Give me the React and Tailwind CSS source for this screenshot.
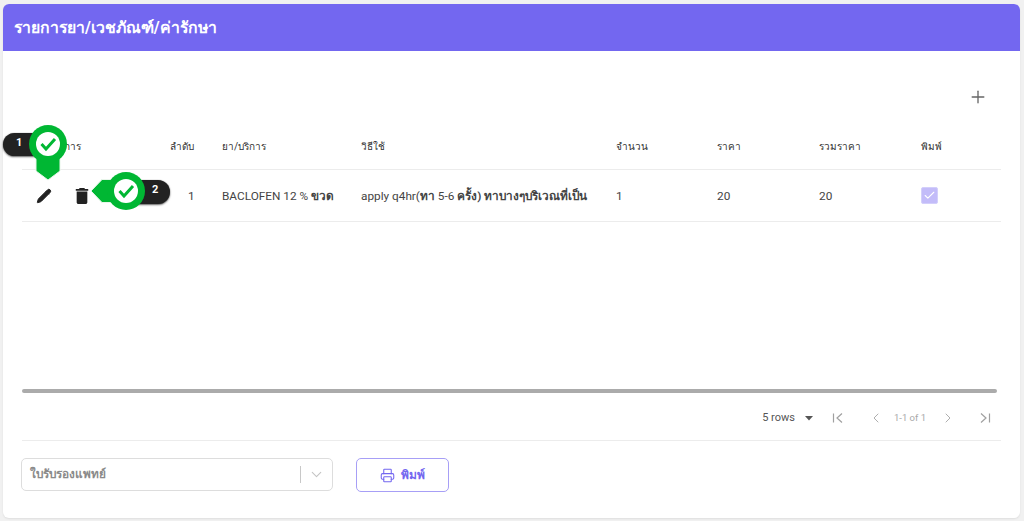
import React from "react";
import { Plus, Pencil, Printer, ChevronDown, ChevronLeft, ChevronRight, Check } from "lucide-react";

const font = "font-['Roboto','Noto_Sans','Noto_Sans_CJK_SC',sans-serif]";
const cols = "grid grid-cols-[128px_52px_139px_255px_101px_102px_102px_102px]";

function Pin1() {
  return (
    <div className="absolute left-[3px] top-[124px] w-[70px] h-[60px]">
      <div className="absolute left-0 top-[9px] w-[40px] h-[23px] rounded-full bg-[#222222] shadow-[0_1px_2px_rgba(0,0,0,0.6),0_0_1px_rgba(0,0,0,0.4)] text-white text-[11px] font-bold pl-[13px] leading-[20px]">1</div>
      <svg className="absolute left-[25px] top-0" width="40" height="58" viewBox="0 0 40 58">
        <path d="M8 34 L8 47 L20 56 L32 47 L32 34 Z" fill="#00b733" stroke="#e8f5ea" strokeWidth="1" />
        <circle cx="20" cy="20" r="19" fill="#00b733" />
        <circle cx="20" cy="20" r="12" fill="#fff" />
        <path d="M13.5 20 L18 25 L27 15" fill="none" stroke="#00b733" strokeWidth="3" />
      </svg>
    </div>
  );
}

function Pin2() {
  return (
    <div className="absolute left-[90px] top-[171px] w-[82px] h-[42px]">
      <div className="absolute right-[2px] top-[9px] w-[50px] h-[24px] rounded-full bg-[#222222] shadow-[0_1px_2px_rgba(0,0,0,0.6),0_0_1px_rgba(0,0,0,0.4)] text-white text-[11px] font-bold pl-[32px] leading-[20px]">2</div>
      <svg className="absolute left-0 top-0" width="58" height="40" viewBox="0 0 58 40">
        <path d="M28 8.5 L12 8.5 L1 20 L12 31.5 L28 31.5 Z" fill="#00b733" stroke="#e8f5ea" strokeWidth="1" />
        <circle cx="36" cy="20" r="19" fill="#00b733" />
        <circle cx="36" cy="20" r="12" fill="#fff" />
        <path d="M29.5 20 L34 25 L43 15" fill="none" stroke="#00b733" strokeWidth="3" />
      </svg>
    </div>
  );
}

export default function App() {
  return (
    <div className={`${font} relative w-[1024px] h-[521px] overflow-hidden bg-[#f1f1f1] px-[3px] pt-[4px]`}>
      <div className="w-[1017px] h-[514px] rounded-[6px] bg-white overflow-hidden flex flex-col shadow-[0_1px_2px_rgba(0,0,0,0.08)]">
        <div className="h-[47px] shrink-0 bg-[#7367f0] text-white text-[15.8px] font-bold flex items-center pl-[11px]">รายการยา/เวชภัณฑ์/ค่ารักษา</div>

        <div className="flex-1 px-[19px] flex flex-col">
          <div className="h-[68px] flex justify-end items-start pt-[36px]">
            <Plus size={20} strokeWidth={1.6} className="text-[#666666] mr-[13px]" />
          </div>

          <div className={`${cols} h-[51px] items-center border-b border-[#ececec] text-[10px] text-[#333333] pt-[4px]`}>
            <div className="pl-[30px]">จัดการ</div>
            <div className="pl-[20px]">ลำดับ</div>
            <div className="pl-[20px]">ยา/บริการ</div>
            <div className="pl-[20px]">วิธีใช้</div>
            <div className="pl-[20px]">จำนวน</div>
            <div className="pl-[20px]">ราคา</div>
            <div className="pl-[20px]">รวมราคา</div>
            <div className="pl-[20px]">พิมพ์</div>
          </div>

          <div className={`${cols} h-[52px] items-center border-b border-[#ececec] text-[11.8px] text-[#444444] pt-[2px]`}>
            <div className="flex items-center pl-[14px] gap-[23px] -mt-[2px]">
              <Pencil size={16} fill="#222222" stroke="#222222" strokeWidth={1.5} />
              <svg width="14" height="16" viewBox="5 3 14 18" fill="#222222">
                <path d="M6 19c0 1.1.9 2 2 2h8c1.1 0 2-.9 2-2V7H6v12zM19 4h-3.5l-1-1h-5l-1 1H5v2h14V4z" />
              </svg>
            </div>
            <div className="pl-[38px]">1</div>
            <div className="pl-[20px] whitespace-nowrap">BACLOFEN 12 % <span className="font-semibold">ขวด</span></div>
            <div className="pl-[20px] whitespace-nowrap">apply q4hr(<span className="font-semibold">ทา</span> 5-6 <span className="font-semibold">ครั้ง) ทาบางๆบริเวณที่เป็น</span></div>
            <div className="pl-[20px]">1</div>
            <div className="pl-[20px]">20</div>
            <div className="pl-[20px]">20</div>
            <div className="pl-[20px] -mt-[2px]">
              <div className="w-[17px] h-[17px] rounded-[2px] bg-[#c3bcf9] border border-[#d3cffb] flex items-center justify-center">
                <Check size={13} strokeWidth={2} className="text-white" />
              </div>
            </div>
          </div>

          <div className="h-[171px] flex items-end">
            <div className="w-[975px] h-[4px] rounded-full bg-[#ababab]"></div>
          </div>

          <div className="h-[48px] shrink-0 border-b border-[#ececec] flex items-center justify-end text-[11px] text-[#555555] pt-[3px]">
            <span>5 rows</span>
            <svg className="ml-[10px]" width="8" height="5" viewBox="0 0 8 5"><path d="M0 0h8L4 4.5z" fill="#555555" /></svg>
            <div className="flex items-center text-[#a8a8a8] ml-[18px] mr-[9px]">
              <svg width="14" height="14" viewBox="0 0 14 14" fill="none" stroke="#a0a0a0" strokeWidth="1.2"><path d="M2.5 2.5v9M11 2.5 6 7l5 4.5" /></svg>
              <ChevronLeft size={16} strokeWidth={1.4} className="ml-[23px]" />
              <span className="ml-[10px] text-[9.5px]">1-1 of 1</span>
              <ChevronRight size={16} strokeWidth={1.4} className="ml-[14px]" />
              <svg className="ml-[22px]" width="14" height="14" viewBox="0 0 14 14" fill="none" stroke="#a0a0a0" strokeWidth="1.2"><path d="M11.5 2.5v9M3 2.5 8 7l-5 4.5" /></svg>
            </div>
          </div>

          <div className="flex items-start mt-[17px] -ml-[1px]">
            <div className="w-[312px] h-[33px] rounded-[5px] border border-[#dddddd] flex items-center text-[11.8px] font-bold text-[#8a8a8a] pl-[8px]">
              <span className="flex-1">ใบรับรองแพทย์</span>
              <span className="w-px h-[17px] bg-[#c8c8c8]"></span>
              <ChevronDown size={17} strokeWidth={1.5} className="text-[#c4c4c4] mx-[7px]" />
            </div>
            <div className="ml-[23px] w-[93px] h-[34px] rounded-[5px] border border-[#a79ff6] flex items-center justify-center gap-[6px] text-[#7367f0] text-[12px] font-bold">
              <Printer size={15} strokeWidth={1.7} />
              <span>พิมพ์</span>
            </div>
          </div>
        </div>
      </div>
      <Pin1 />
      <Pin2 />
    </div>
  );
}
